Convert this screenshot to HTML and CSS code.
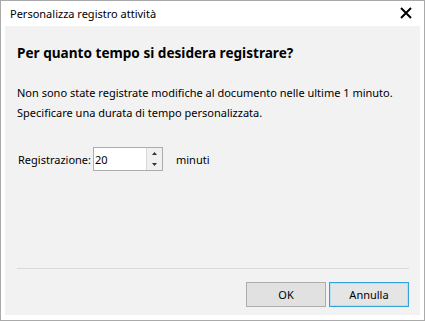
FILE: index.html
```html
<!DOCTYPE html>
<html lang="it">
<head>
    <meta charset="UTF-8">
    <title>Personalizza registro attività</title>
    <link rel="stylesheet" href="styles.css">
</head>
<body>
    <div class="window">
        <div class="title-bar">
            <span class="title">Personalizza registro attività</span>
            <span class="close">
                <svg width="12" height="12" viewBox="0 0 12 12">
                    <path d="M1 1 L11 11 M11 1 L1 11" stroke="#000" stroke-width="2" fill="none"/>
                </svg>
            </span>
        </div>
        <div class="content">
            <div class="main">
                <h1 class="heading">Per quanto tempo si desidera registrare?</h1>
                <p class="message">Non sono state registrate modifiche al documento nelle ultime 1 minuto.<br>Specificare una durata di tempo personalizzata.</p>
                <div class="field-row">
                    <label class="field-label" for="duration">Registrazione:</label>
                    <div class="spin-box">
                        <input id="duration" class="spin-input" type="text" value="20">
                        <div class="spin-buttons">
                            <span class="spin-btn">
                                <svg width="5" height="3" viewBox="0 0 5 3"><path d="M2.5 0 L5 3 L0 3 Z" fill="#333"/></svg>
                            </span>
                            <span class="spin-btn">
                                <svg width="5" height="3" viewBox="0 0 5 3"><path d="M0 0 L5 0 L2.5 3 Z" fill="#333"/></svg>
                            </span>
                        </div>
                    </div>
                    <span class="unit">minuti</span>
                </div>
            </div>
            <div class="footer">
                <button class="btn">OK</button>
                <button class="btn default">Annulla</button>
            </div>
        </div>
    </div>
</body>
</html>
```

FILE: styles.css
```css
body {
    margin: 0;
    background: #fff;
    font-family: "Noto Sans", "Open Sans", sans-serif;
    font-size: 11px;
    color: #000;
}

.window {
    width: 425px;
    height: 321px;
    box-sizing: border-box;
    border: 1px solid #aaaaaa;
    background: #fff;
    display: flex;
    flex-direction: column;
}

.title-bar {
    height: 25px;
    display: flex;
    align-items: center;
    justify-content: space-between;
    padding: 0 12px 0 9px;
}

.title {
    font-size: 11px;
    color: #000;
}

.close {
    display: flex;
    margin-top: -1px;
}

.content {
    flex: 1;
    margin: 0 4px 5px 4px;
    background: #f2f2f2;
    display: flex;
    flex-direction: column;
}

.main {
    flex: 1;
    padding: 17px 12px 0 12px;
}

.heading {
    margin: 0;
    font-size: 13.6px;
    font-weight: bold;
    line-height: 20px;
}

.message {
    margin: 20px 0 0 0;
    line-height: 20px;
    white-space: nowrap;
}

.field-row {
    display: flex;
    align-items: center;
    margin-top: 24px;
}

.field-label {
    margin-left: 1px;
    margin-right: 2px;
}

.spin-box {
    display: flex;
    flex-shrink: 0;
    width: 70px;
    height: 24px;
    box-sizing: border-box;
    border: 1px solid #acacac;
    background: #fff;
}

.spin-input {
    width: 51px;
    min-width: 0;
    border: none;
    outline: none;
    padding: 0 0 0 1px;
    font-family: inherit;
    font-size: 11px;
    background: transparent;
}

.spin-buttons {
    flex: 1;
    display: flex;
    flex-direction: column;
    border-left: 1px solid #d9d9d9;
    background: #f0f0f0;
}

.spin-btn {
    flex: 1;
    display: flex;
    align-items: center;
    justify-content: center;
}

.unit {
    margin-left: 13px;
}

.footer {
    border-top: 1px solid #dadada;
    margin: 0 11px 0 12px;
    padding: 13px 0 8px 0;
    display: flex;
    justify-content: flex-end;
    gap: 3px;
}

.btn {
    width: 80px;
    height: 25px;
    box-sizing: border-box;
    border: 1px solid #adadad;
    background: #e1e1e1;
    font-family: inherit;
    font-size: 11px;
    color: #000;
    padding: 0;
}

.btn.default {
    border: 1px solid #34a3dc;
    box-shadow: inset 0 0 0 1px #b6dff4;
    background: #e5e5e5;
}
```
